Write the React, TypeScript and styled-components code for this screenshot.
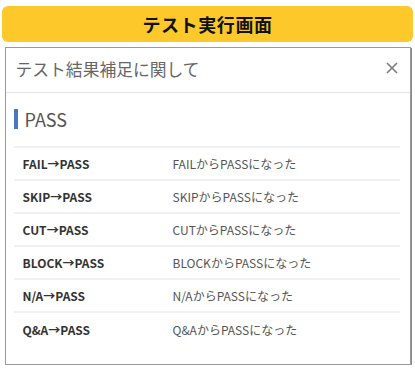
import React from 'react';
import styled, { createGlobalStyle } from 'styled-components';

const rows = [
  { from: 'FAIL' },
  { from: 'SKIP' },
  { from: 'CUT' },
  { from: 'BLOCK' },
  { from: 'N/A' },
  { from: 'Q&A' },
];

const GlobalStyle = createGlobalStyle`
  html, body {
    margin: 0;
    padding: 0;
    background: #ffffff;
  }
  body {
    font-family: 'Noto Sans CJK JP', sans-serif;
    color: #333;
  }
`;

function App(): JSX.Element {
  return (
    <>
      <GlobalStyle />
      <Page>
        <TitleBar>テスト実行画面</TitleBar>
        <Modal>
          <ModalHeader>
            <ModalTitle>テスト結果補足に関して</ModalTitle>
            <CloseButton aria-label="close">
              <svg width="12" height="12" viewBox="0 0 12 12">
                <path d="M1 1 L11 11 M11 1 L1 11" stroke="#7a7a7a" strokeWidth="1.6" fill="none" />
              </svg>
            </CloseButton>
          </ModalHeader>
          <ModalBody>
            <SectionTitle>PASS</SectionTitle>
            <Table>
              <tbody>
                {rows.map((v) => (
                  <Row key={v.from}>
                    <KeyCell>{v.from}→PASS</KeyCell>
                    <ValueCell>{v.from}からPASSになった</ValueCell>
                  </Row>
                ))}
              </tbody>
            </Table>
          </ModalBody>
        </Modal>
      </Page>
    </>
  );
}

const Page = styled.div`
  width: 415px;
  padding: 6px 2px 0;
  box-sizing: border-box;
  display: flex;
  flex-direction: column;
  align-items: center;
  gap: 5px;
`;

const TitleBar = styled.h1`
  margin: 0;
  width: 411px;
  height: 36px;
  border-radius: 6px;
  background-color: #fcc82a;
  display: flex;
  align-items: center;
  justify-content: center;
  font-family: 'Noto Sans CJK JP', sans-serif;
  font-size: 18px;
  font-weight: 700;
  letter-spacing: 0.6px;
  color: #111;
`;

const Modal = styled.section`
  width: 406px;
  height: 318px;
  box-sizing: border-box;
  border: 1px solid #9a9a9a;
  box-shadow: 1px 1px 0 #8a8a8a;
  background: #fff;
`;

const ModalHeader = styled.header`
  height: 44px;
  display: flex;
  align-items: center;
  justify-content: space-between;
  padding: 0 12px 0 10px;
  border-bottom: 1px solid #e6e6e6;
`;

const ModalTitle = styled.h2`
  margin: -3px 0 0;
  font-family: 'Noto Sans CJK JP', sans-serif;
  font-size: 16.8px;
  font-weight: 400;
  color: #666;
`;

const CloseButton = styled.span`
  display: flex;
  align-items: center;
  margin-top: -5px;
`;

const ModalBody = styled.div`
  padding: 16px 10px 0 8px;
`;

const SectionTitle = styled.h3`
  margin: 0 0 17px;
  height: 20px;
  display: flex;
  align-items: center;
  border-left: 4px solid #4a76c2;
  padding-left: 7px;
  font-family: 'Noto Sans CJK JP', sans-serif;
  font-size: 18px;
  font-weight: 400;
  color: #555;
`;

const Table = styled.table`
  width: 100%;
  border-collapse: collapse;
`;

const Row = styled.tr`
  height: 33px;
  border-top: 2px solid #eef0f3;
`;

const KeyCell = styled.td`
  width: 150px;
  padding: 0 0 0 9px;
  font-size: 12px;
  font-weight: 700;
  color: #333;
`;

const ValueCell = styled.td`
  padding: 0;
  font-size: 12px;
  font-weight: 400;
  color: #555;
`;

export default App;
